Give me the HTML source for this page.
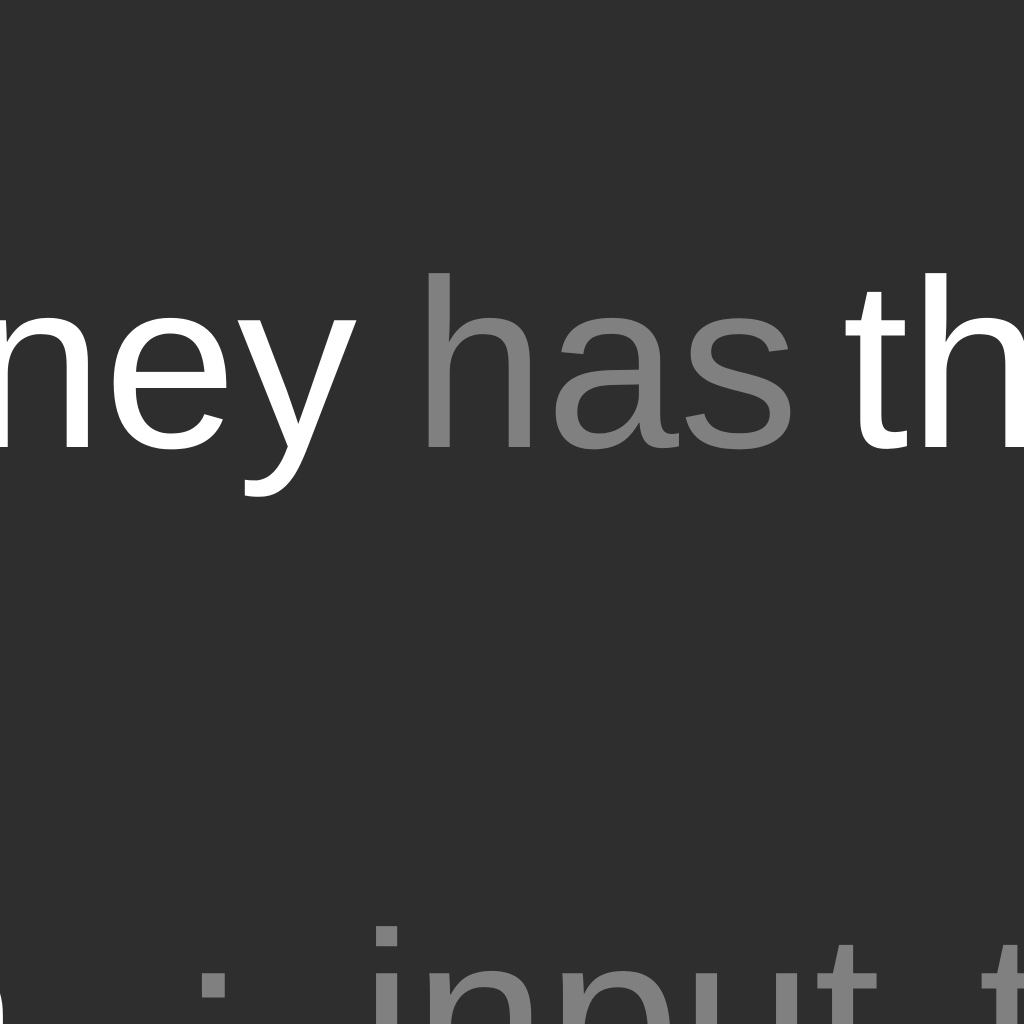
<!DOCTYPE html>
<html><head><style>
html,body{margin:0;padding:0;width:1024px;height:1024px;overflow:hidden;background:#2e2e2e;}
#c{position:relative;width:1024px;height:1024px;overflow:hidden;}
span{position:absolute;font-family:"Liberation Sans","DejaVu Sans",sans-serif;font-size:240px;line-height:240px;white-space:pre;}
.w{color:#fff}.g{color:#808080}
</style></head><body><div id="c">
<span class="w" style="left:-30px;top:244px">ney</span>
<span class="g" style="left:412px;top:244px">has</span>
<span class="w" style="left:842px;top:244px">th</span>
<span class="w" style="left:-115px;top:897px">n</span>
<span class="g" style="left:180px;top:897px">:</span>
<span class="g" style="left:360px;top:897px">input</span>
<span class="g" style="left:978px;top:897px">t</span>
</div></body></html>
